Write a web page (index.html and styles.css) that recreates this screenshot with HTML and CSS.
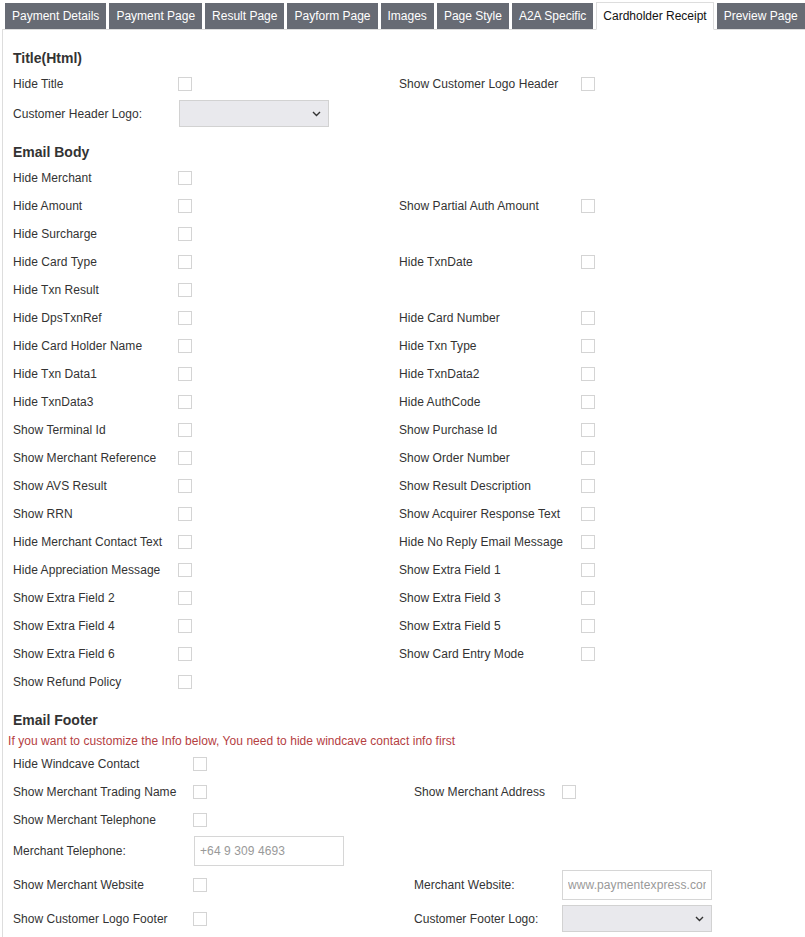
FILE: index.html
```html
<!DOCTYPE html>
<html>
<head>
<meta charset="utf-8">
<link rel="stylesheet" href="styles.css">
</head>
<body>
<div class="wrap">
  <div class="tabs">
    <div class="tab">Payment Details</div>
    <div class="tab">Payment Page</div>
    <div class="tab">Result Page</div>
    <div class="tab">Payform Page</div>
    <div class="tab">Images</div>
    <div class="tab">Page Style</div>
    <div class="tab">A2A Specific</div>
    <div class="tab active">Cardholder Receipt</div>
    <div class="tab">Preview Page</div>
  </div>
  <div class="panel">
    <h3 class="sec first">Title(Html)</h3>
    <div class="row">
      <div class="field"><span class="lbl">Hide Title</span><span class="cb"></span></div>
      <div class="field"><span class="lbl r">Show Customer Logo Header</span><span class="cb"></span></div>
    </div>
    <div class="row ctl">
      <div class="field"><span class="lbl sl">Customer Header Logo:</span><div class="select"><svg width="9" height="6" viewBox="0 0 9 6"><path d="M1 1l3.5 3.5L8 1" fill="none" stroke="#333" stroke-width="1.4"/></svg></div></div>
    </div>

    <h3 class="sec body">Email Body</h3>
    <div class="row"><div class="field"><span class="lbl">Hide Merchant</span><span class="cb"></span></div><div></div></div>
    <div class="row"><div class="field"><span class="lbl">Hide Amount</span><span class="cb"></span></div><div class="field"><span class="lbl r">Show Partial Auth Amount</span><span class="cb"></span></div></div>
    <div class="row"><div class="field"><span class="lbl">Hide Surcharge</span><span class="cb"></span></div><div></div></div>
    <div class="row"><div class="field"><span class="lbl">Hide Card Type</span><span class="cb"></span></div><div class="field"><span class="lbl r">Hide TxnDate</span><span class="cb"></span></div></div>
    <div class="row"><div class="field"><span class="lbl">Hide Txn Result</span><span class="cb"></span></div><div></div></div>
    <div class="row"><div class="field"><span class="lbl">Hide DpsTxnRef</span><span class="cb"></span></div><div class="field"><span class="lbl r">Hide Card Number</span><span class="cb"></span></div></div>
    <div class="row"><div class="field"><span class="lbl">Hide Card Holder Name</span><span class="cb"></span></div><div class="field"><span class="lbl r">Hide Txn Type</span><span class="cb"></span></div></div>
    <div class="row"><div class="field"><span class="lbl">Hide Txn Data1</span><span class="cb"></span></div><div class="field"><span class="lbl r">Hide TxnData2</span><span class="cb"></span></div></div>
    <div class="row"><div class="field"><span class="lbl">Hide TxnData3</span><span class="cb"></span></div><div class="field"><span class="lbl r">Hide AuthCode</span><span class="cb"></span></div></div>
    <div class="row"><div class="field"><span class="lbl">Show Terminal Id</span><span class="cb"></span></div><div class="field"><span class="lbl r">Show Purchase Id</span><span class="cb"></span></div></div>
    <div class="row"><div class="field"><span class="lbl">Show Merchant Reference</span><span class="cb"></span></div><div class="field"><span class="lbl r">Show Order Number</span><span class="cb"></span></div></div>
    <div class="row"><div class="field"><span class="lbl">Show AVS Result</span><span class="cb"></span></div><div class="field"><span class="lbl r">Show Result Description</span><span class="cb"></span></div></div>
    <div class="row"><div class="field"><span class="lbl">Show RRN</span><span class="cb"></span></div><div class="field"><span class="lbl r">Show Acquirer Response Text</span><span class="cb"></span></div></div>
    <div class="row"><div class="field"><span class="lbl">Hide Merchant Contact Text</span><span class="cb"></span></div><div class="field"><span class="lbl r">Hide No Reply Email Message</span><span class="cb"></span></div></div>
    <div class="row"><div class="field"><span class="lbl">Hide Appreciation Message</span><span class="cb"></span></div><div class="field"><span class="lbl r">Show Extra Field 1</span><span class="cb"></span></div></div>
    <div class="row"><div class="field"><span class="lbl">Show Extra Field 2</span><span class="cb"></span></div><div class="field"><span class="lbl r">Show Extra Field 3</span><span class="cb"></span></div></div>
    <div class="row"><div class="field"><span class="lbl">Show Extra Field 4</span><span class="cb"></span></div><div class="field"><span class="lbl r">Show Extra Field 5</span><span class="cb"></span></div></div>
    <div class="row"><div class="field"><span class="lbl">Show Extra Field 6</span><span class="cb"></span></div><div class="field"><span class="lbl r">Show Card Entry Mode</span><span class="cb"></span></div></div>
    <div class="row"><div class="field"><span class="lbl">Show Refund Policy</span><span class="cb"></span></div><div></div></div>

    <h3 class="sec foot">Email Footer</h3>
    <p class="warn">If you want to customize the Info below, You need to hide windcave contact info first</p>
    <div class="row f"><div class="field"><span class="lbl fl">Hide Windcave Contact</span><span class="cb"></span></div><div></div></div>
    <div class="row f"><div class="field"><span class="lbl fl">Show Merchant Trading Name</span><span class="cb"></span></div><div class="field"><span class="lbl fr">Show Merchant Address</span><span class="cb"></span></div></div>
    <div class="row f"><div class="field"><span class="lbl fl">Show Merchant Telephone</span><span class="cb"></span></div><div></div></div>
    <div class="row f tel"><div class="field"><span class="lbl fl fi">Merchant Telephone:</span><div class="input"><span class="ph">+64 9 309 4693</span></div></div><div></div></div>
    <div class="row f web"><div class="field"><span class="lbl fl">Show Merchant Website</span><span class="cb"></span></div><div class="field"><span class="lbl fr">Merchant Website:</span><div class="input"><span class="ph">www.paymentexpress.com</span></div></div></div>
    <div class="row f logo"><div class="field"><span class="lbl fl">Show Customer Logo Footer</span><span class="cb"></span></div><div class="field"><span class="lbl fr">Customer Footer Logo:</span><div class="select"><svg width="9" height="6" viewBox="0 0 9 6"><path d="M1 1l3.5 3.5L8 1" fill="none" stroke="#333" stroke-width="1.4"/></svg></div></div></div>
  </div>
</div>
</body>
</html>
```

FILE: styles.css
```css
html, body {
  margin: 0;
  padding: 0;
  background: #fff;
}
body {
  font-family: "Liberation Sans", Arial, sans-serif;
  font-size: 12px;
  color: #333;
  letter-spacing: 0.05px;
}
.wrap {
  margin-left: 2px;
}
.tabs {
  display: flex;
  align-items: flex-end;
  padding: 2px 0 0 3px;
  border-bottom: 1px solid #ddd;
  letter-spacing: 0;
}
.tab {
  box-sizing: border-box;
  height: 26px;
  line-height: 24px;
  padding: 0 6px;
  border: 1px solid #676b74;
  background: #676b74;
  color: #fff;
  margin-right: 3px;
  white-space: nowrap;
}
.tab.active {
  height: 28px;
  line-height: 26px;
  margin-bottom: -1px;
  background: #fff;
  color: #111;
  border: 1px solid #ddd;
  border-bottom-color: #fff;
}
.panel {
  border-left: 1px solid #ddd;
  padding: 0 0 20px 10px;
}
.sec {
  margin: 0;
  font-size: 14px;
  font-weight: bold;
  line-height: 24px;
  height: 24px;
  color: #333;
  letter-spacing: 0;
}
.sec.first { padding-top: 16px; }
.sec.body { margin-top: 10px; }
.sec.foot { margin-top: 12px; }
.warn {
  margin: 0 0 0 -5px;
  line-height: 18px;
  height: 18px;
  color: #b5403f;
  font-size: 12px;
}
.row {
  display: grid;
  grid-template-columns: 386px auto;
  height: 28px;
  align-items: center;
}
.row.f {
  grid-template-columns: 401px auto;
}
.row.ctl {
  height: 32px;
  padding: 2px 0 3px;
  box-sizing: border-box;
}
.row.tel {
  height: 34px;
  padding: 2px 0;
  box-sizing: border-box;
}
.row.web {
  height: 34px;
  padding: 2px 0;
  box-sizing: border-box;
}
.row.logo {
  height: 32px;
  padding: 3px 0 2px;
  box-sizing: border-box;
}
.field {
  display: flex;
  align-items: center;
  height: 100%;
}
.lbl {
  flex: none;
  width: 165px;
  white-space: nowrap;
}
.lbl.sl { width: 166px; }
.lbl.r { width: 182px; }
.lbl.fl { width: 180px; }
.lbl.fl.fi { width: 181px; }
.lbl.fr { width: 148px; }
.cb {
  flex: none;
  box-sizing: border-box;
  width: 14px;
  height: 14px;
  border: 1px solid #d4d4d4;
  background: #fff;
}
.select {
  box-sizing: border-box;
  width: 150px;
  height: 27px;
  border: 1px solid #d2d2d2;
  background: #e9e9ed;
  display: flex;
  align-items: center;
  justify-content: flex-end;
  padding-right: 7px;
}
.select svg { display: block; }
.input {
  box-sizing: border-box;
  width: 150px;
  height: 30px;
  border: 1px solid #d6d6d6;
  background: #fff;
  padding: 0 5px;
  display: flex;
  align-items: center;
  white-space: nowrap;
}
.ph {
  display: block;
  width: 100%;
  overflow: hidden;
  color: #999;
  font-size: 12px;
  letter-spacing: 0.1px;
}
```
